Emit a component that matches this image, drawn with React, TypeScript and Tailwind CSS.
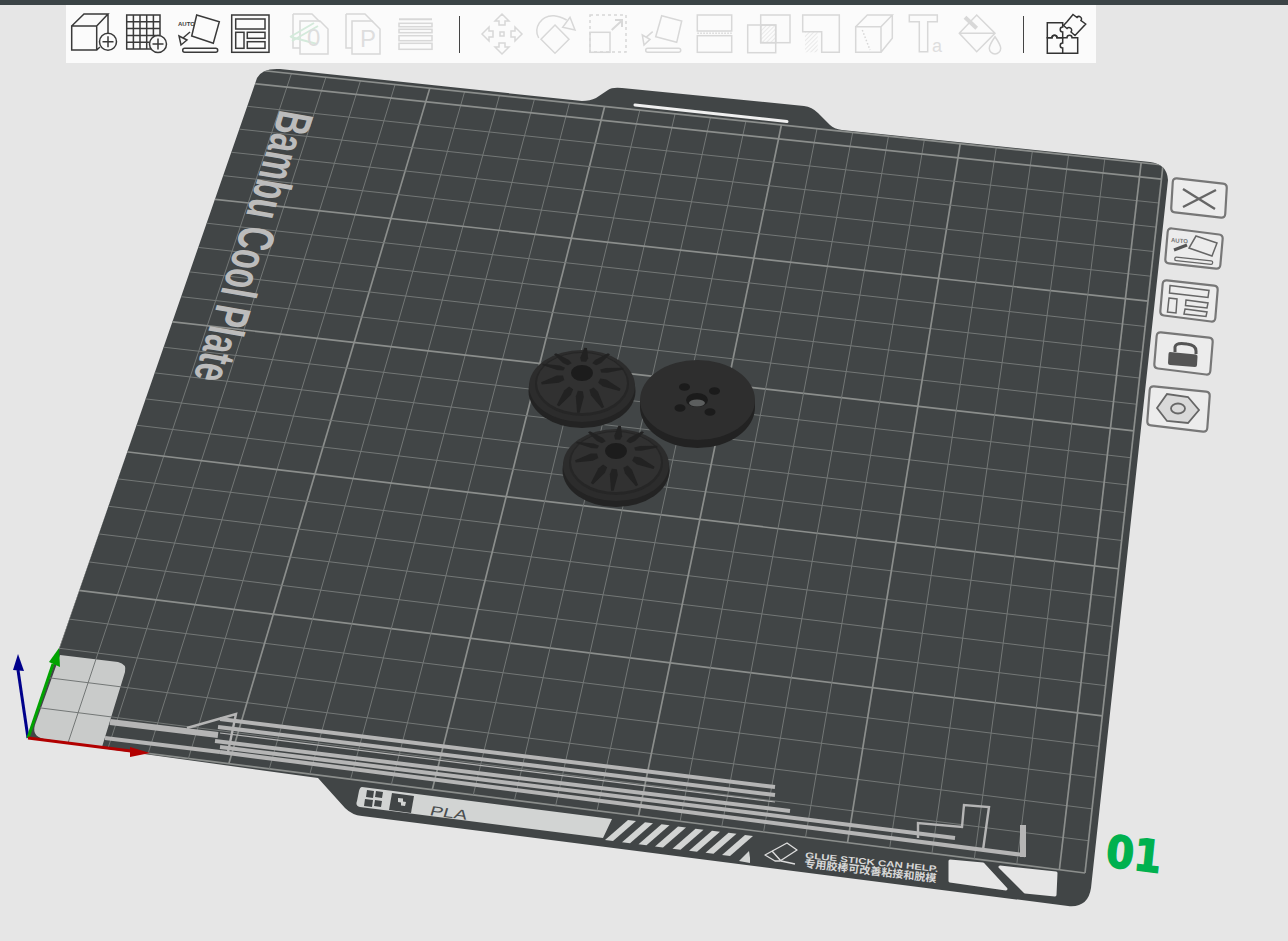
import type { ReactNode } from "react";

const DARK = "#3a3a3a";
const OFF = "#d8d8d8";
const PLATE =
  "M257 78 Q262 68 280 69 L582 101 Q590 101 596 98 L608 90 Q612 87 622 88 L804 106 Q812 107 818 113 L830 125 Q834 129 842 130 L1150 162 Q1167 164 1168 180 L1091 888 Q1088 908 1068 906 L362 816 Q352 815 345 808 L318 778 L28 738 Z";

// plate homography: bed millimetres -> screen pixels
const BL = [28, 738];
const BR = [1085, 873];
const TR = [1163, 165];
const TL = [257, 70];

const dx1 = BR[0] - TR[0];
const dx2 = TL[0] - TR[0];
const sx = BL[0] - BR[0] + TR[0] - TL[0];
const dy1 = BR[1] - TR[1];
const dy2 = TL[1] - TR[1];
const sy = BL[1] - BR[1] + TR[1] - TL[1];
const den = dx1 * dy2 - dx2 * dy1;
const g = (sx * dy2 - dx2 * sy) / den;
const h = (dx1 * sy - sx * dy1) / den;
const a = BR[0] - BL[0] + g * BR[0];
const b = TL[0] - BL[0] + h * TL[0];
const d = BR[1] - BL[1] + g * BR[1];
const e = TL[1] - BL[1] + h * TL[1];

function project(mmX: number, mmY: number) {
  const u = mmX / 256;
  const v = mmY / 256;
  const w = g * u + h * v + 1;
  return [(a * u + b * v + BL[0]) / w, (d * u + e * v + BL[1]) / w];
}

const gridSteps = Array.from({ length: 26 }, (_, i) => i * 10).concat(256);

function BedGrid() {
  return (
    <g clipPath="url(#plate-clip)">
      {gridSteps.map((mm) => {
        const major = mm % 50 === 0 || mm === 256;
        const [x1, y1] = project(mm, 0);
        const [x2, y2] = project(mm, 256);
        const [x3, y3] = project(0, mm);
        const [x4, y4] = project(256, mm);
        const color = major ? "#8b8e8c" : "#737776";
        const width = major ? 1.7 : 1;
        return (
          <g key={mm} stroke={color} strokeWidth={width}>
            <line x1={x1} y1={y1} x2={x2} y2={y2} />
            <line x1={x3} y1={y3} x2={x4} y2={y4} />
          </g>
        );
      })}
    </g>
  );
}

const wheelAngles = [200, 165, 125, 95, 60, 25, -10, -50, -85, -130];

function Wheel({ cx, cy, hubY }: { cx: number; cy: number; hubY: number }) {
  return (
    <g>
      <ellipse cx={cx} cy={cy + 5} rx={53.5} ry={37} fill="#232323" />
      <ellipse cx={cx} cy={cy} rx={53} ry={36} fill="#2c2c2c" />
      <ellipse cx={cx} cy={cy - 2} rx={47} ry={32} fill="#262626" />
      <ellipse cx={cx} cy={cy - 3} rx={45} ry={30} fill="#313131" />
      {wheelAngles.map((ang) => {
        const c = Math.cos((ang * Math.PI) / 180);
        const s = Math.sin((ang * Math.PI) / 180);
        const ys = s < 0 ? 0.6 : 0.95;
        const pt = (r: number, w: number) => `${cx + r * c - w * s},${hubY + (r * s + w * c) * ys}`;
        const points = [pt(19, 2.5), pt(25, 4), pt(42, 1.3), pt(42, -1.3), pt(25, -4), pt(19, -2.5)].join(" ");
        return <polygon key={ang} points={points} fill="#222222" />;
      })}
      <ellipse cx={cx} cy={hubY} rx={11} ry={8} fill="#1c1c1c" />
    </g>
  );
}

function FlatDisc() {
  return (
    <g>
      <ellipse cx={697.5} cy={407} rx={57.5} ry={41} fill="#222222" />
      <rect x={640} y={401} width={115} height={6} fill="#222222" />
      <ellipse cx={697.5} cy={400} rx={57.5} ry={40} fill="#2e2e2e" />
      <ellipse cx={684.5} cy={387} rx={5.5} ry={3.8} fill="#1b1b1b" />
      <ellipse cx={714.5} cy={391} rx={5.5} ry={3.8} fill="#1b1b1b" />
      <ellipse cx={680} cy={408} rx={5.5} ry={3.8} fill="#1b1b1b" />
      <ellipse cx={710} cy={412} rx={5.5} ry={3.8} fill="#1b1b1b" />
      <ellipse cx={697} cy={400} rx={11} ry={7} fill="#1b1b1b" />
      <ellipse cx={697} cy={403} rx={8} ry={3.5} fill="#5c5e5e" />
    </g>
  );
}

function PurgeLines() {
  return (
    <g stroke="#b5b5b5" fill="none">
      <line x1={110} y1={722} x2={218} y2={735} strokeWidth={6} />
      <line x1={105} y1={738} x2={220} y2={752} strokeWidth={4} />
      <line x1={220} y1={719} x2={775} y2={787} strokeWidth={4} />
      <line x1={218} y1={727} x2={775} y2={795} strokeWidth={4} />
      <line x1={220} y1={733} x2={775} y2={802} strokeWidth={1.2} />
      <line x1={215} y1={741} x2={790} y2={811} strokeWidth={4} />
      <line x1={220} y1={747} x2={955} y2={838} strokeWidth={4} />
      <path d="M220 752 L1023 855 V825" strokeWidth={4} />
      <line x1={1023} y1={857} x2={1023} y2={825} strokeWidth={6} />
      <path d="M187 728 L236 714 L228 752" strokeWidth={2.4} />
      <path d="M918 838 V823 L962 827 L964 805 L989 807 L983 850" strokeWidth={2.4} />
    </g>
  );
}

function HatchStrip() {
  const stripes = [605, 622, 638.5, 655, 672.5, 689, 705.5, 722];
  return (
    <g fill="#d2d4d3">
      {stripes.map((x) => {
        const botY = 840 + (x - 605) * 0.128;
        const topY = botY - 20;
        return (
          <polygon
            key={x}
            points={`${x},${botY} ${x + 23},${topY} ${x + 31},${topY + 1} ${x + 8},${botY + 1}`}
          />
        );
      })}
      <polygon points="739,861 749,851 750,858 750,863" />
      <path d="M362 787 L612 819 L603 838 L360 807 Q355 806 357 801 L359 791 Q360 787 362 787 Z" />
    </g>
  );
}

// rounded quad, for the tilted side buttons
function roundedQuad(pts: number[][], r: number) {
  let out = "";
  pts.forEach((p, i) => {
    const prev = pts[(i + pts.length - 1) % pts.length];
    const next = pts[(i + 1) % pts.length];
    const toward = (q: number[]) => {
      const len = Math.hypot(q[0] - p[0], q[1] - p[1]);
      return [p[0] + ((q[0] - p[0]) * r) / len, p[1] + ((q[1] - p[1]) * r) / len];
    };
    const start = toward(prev);
    const end = toward(next);
    out += `${i === 0 ? "M" : "L"}${start[0]} ${start[1]} Q${p[0]} ${p[1]} ${end[0]} ${end[1]} `;
  });
  return out + "Z";
}

function SideButton({ pts, children }: { pts: number[][]; children: ReactNode }) {
  return (
    <g>
      <path d={roundedQuad(pts, 4)} fill="#ececec" stroke="#777777" strokeWidth={2.2} />
      {children}
    </g>
  );
}

function PlateScene() {
  return (
    <svg className="absolute inset-0 h-[941px] w-[1288px]" viewBox="0 0 1288 941">
      <defs>
        <clipPath id="plate-clip">
          <path d={PLATE} />
        </clipPath>
      </defs>
      <path d={PLATE} fill="#414546" />
      <path d="M60 655 L118 662 Q127 664 125 672 L102 747 L44 739 Q30 736 36 722 Z" fill="#c9cbca" />
      <BedGrid />
      <line x1={635} y1={105} x2={787} y2={121.5} stroke="#f0f0f0" strokeWidth={3} strokeLinecap="round" />
      <PurgeLines />
      <HatchStrip />

      <text
        transform="matrix(-0.307 0.951 -0.986 -0.169 280 109)"
        fontSize={50}
        fontWeight={700}
        textLength={283}
        lengthAdjust="spacingAndGlyphs"
        fill="#bcbcbc"
        className="font-['Liberation_Sans',sans-serif]"
      >
        Bambu Cool Plate
      </text>

      <path d="M367 790 l7 1 l-1 7 l-7 -1 Z M376 791 l7 1 l-1 6 l-7 -1 Z M365 799 l8 1 l-1 7 l-8 -1 Z M375 800 l7 1 l-1 6 l-7 -1 Z" fill="#414546" />
      <path d="M392 793 L414 796 L411 813 L389 810 Z" fill="#414546" />
      <path d="M398 798 l5 0.6 l0 3 l3 0.4 l-1 4 l-4 -0.5 l0 -3 l-3 -0.4 Z" fill="#d2d4d3" />
      <text
        transform="matrix(1 0.13 -0.3 1 429 815)"
        fontSize={13}
        textLength={37}
        lengthAdjust="spacingAndGlyphs"
        fill="#4a4d4e"
        className="font-['Liberation_Sans',sans-serif]"
      >
        PLA
      </text>

      <g fill="none" stroke="#dcdcdc" strokeWidth={1.4} strokeLinejoin="round">
        <path d="M765 855 L787 843 L797 850 L780 861 L775 861 Z" />
        <path d="M772 851 L781 861 M781 861 L795 864" />
      </g>
      <text
        transform="matrix(1 0.105 -0.1 1 805 858)"
        fontSize={8.5}
        fontWeight={700}
        textLength={133}
        lengthAdjust="spacingAndGlyphs"
        fill="#d8d8d8"
        className="font-['Liberation_Sans',sans-serif]"
      >
        GLUE STICK CAN HELP.
      </text>
      <text
        transform="matrix(1 0.115 -0.1 1 804 867)"
        fontSize={10.5}
        fontWeight={700}
        textLength={132}
        lengthAdjust="spacingAndGlyphs"
        fill="#d8d8d8"
        className="font-['Noto_Sans_CJK_SC',sans-serif]"
      >
        专用胶棒可改善粘接和脱模
      </text>

      <polygon points="950,861 983,864 1006,889 950,881" fill="#e6e6e6" stroke="#e6e6e6" strokeLinejoin="round" strokeWidth={3} />
      <polygon points="1000,867 1056,873 1055,895 1025,892" fill="#e6e6e6" stroke="#e6e6e6" strokeLinejoin="round" strokeWidth={3} />

      <Wheel cx={582} cy={386} hubY={373} />
      <FlatDisc />
      <Wheel cx={616} cy={465} hubY={451} />

      {/* axes */}
      <line x1={28} y1={738} x2={18} y2={670} stroke="#00008b" strokeWidth={3} />
      <polygon points="18,654 24,671 13,670" fill="#00008b" />
      <line x1={28} y1={738} x2={53} y2={664} stroke="#00a300" strokeWidth={3} />
      <polygon points="59,648 60,667 49,662" fill="#00a300" />
      <line x1={28} y1={738} x2={131} y2={751} stroke="#b20000" strokeWidth={3} />
      <polygon points="150,753 130,747 130,757" fill="#b20000" />

      <text
        transform="matrix(1 0.13 -0.1 1 1105 866)"
        fontSize={44}
        fontWeight={700}
        textLength={55}
        lengthAdjust="spacingAndGlyphs"
        fill="#00b14f"
        stroke="#00b14f"
        strokeWidth={1.5}
        className="font-['DejaVu_Sans',sans-serif]"
      >
        01
      </text>

      <SideButton pts={[[1173, 178], [1227, 184], [1225, 218], [1171, 212]]}>
        <path d="M1183 189 L1215 209 M1183 207 L1216 190" stroke="#666666" strokeWidth={2.4} />
      </SideButton>
      <SideButton pts={[[1168, 228], [1223, 235], [1220, 269], [1165, 263]]}>
        <polygon points="1196,236 1217,243 1212,256 1189,248" fill="none" stroke="#666666" strokeWidth={1.5} />
        <rect x={1175} y={257} width={38} height={3.5} rx={1.5} transform="rotate(6 1175 257)" fill="none" stroke="#666666" strokeWidth={1.3} />
        <path d="M1174 250 L1187 245" stroke="#555555" strokeWidth={3} />
        <text
          transform="matrix(1 0.09 0 1 1171 242)"
          fontSize={6}
          fontWeight={700}
          fill="#777777"
          className="font-['Liberation_Sans',sans-serif]"
        >
          AUTO
        </text>
      </SideButton>
      <SideButton pts={[[1163, 280], [1218, 286], [1215, 322], [1160, 315]]}>
        <g fill="none" stroke="#666666" strokeWidth={1.5}>
          <polygon points="1170,285.5 1209,290.5 1208,297.5 1169.5,293" />
          <polygon points="1169,298 1177,299 1176,313 1167.5,312" />
          <polygon points="1186,300 1208,303 1207,308 1185.5,305.5" />
          <polygon points="1185,309 1207,312 1206,316.5 1184,314" />
        </g>
      </SideButton>
      <SideButton pts={[[1157, 332], [1213, 338], [1210, 375], [1154, 368]]}>
        <path d="M1175 352 V347 Q1176 342 1187 344 Q1196 345 1196 351 V354" fill="none" stroke="#555555" strokeWidth={3} />
        <path d="M1170 352 L1196 354.5 Q1198 355 1197.5 357 L1197 365 Q1197 367 1195 367 L1170 365 Q1168 365 1168 363 L1168.5 354 Q1168.5 352 1170 352 Z" fill="#555555" />
      </SideButton>
      <SideButton pts={[[1150, 386], [1210, 392], [1207, 432], [1147, 425]]}>
        <polygon points="1157,408 1167,394 1188,397 1199,410 1188,423 1167,421" fill="#d9d9d9" stroke="#666666" strokeWidth={1.8} />
        <ellipse cx={1178} cy={408.5} rx={7} ry={5} fill="#d9d9d9" stroke="#666666" strokeWidth={1.8} />
      </SideButton>
    </svg>
  );
}

function Icon({ ml, color, children }: { ml?: string; color: string; children: ReactNode }) {
  return (
    <svg
      viewBox="0 0 48 48"
      fill="none"
      stroke={color}
      strokeWidth={1.5}
      className={`h-12 w-12 shrink-0 ${ml ?? ""}`}
    >
      {children}
    </svg>
  );
}

function Plus({ cx, cy }: { cx: number; cy: number }) {
  return (
    <g>
      <circle cx={cx} cy={cy} r={8.5} fill="#fbfbfb" />
      <path d={`M${cx - 5.5} ${cy} H${cx + 5.5} M${cx} ${cy - 5.5} V${cy + 5.5}`} />
    </g>
  );
}

function Hatch({ id, color }: { id: string; color: string }) {
  return (
    <defs>
      <pattern id={id} width="3" height="3" patternUnits="userSpaceOnUse" patternTransform="rotate(-45)">
        <line x1="0" y1="0" x2="3" y2="0" stroke={color} strokeWidth="1" />
      </pattern>
    </defs>
  );
}

function Toolbar() {
  return (
    <div className="relative ml-[66px] flex h-[58px] w-[1030px] items-center bg-[#fbfbfb] pl-1">
      <Icon color={DARK}>
        <path d="M1.7 16 H26.7 V40 H1.7 Z M1.7 16 L14 4 H38 L26.7 16 M38 4 V24 M26.7 40 L30 37" />
        <Plus cx={38} cy={31.7} />
      </Icon>
      <Icon ml="ml-[5px]" color={DARK}>
        <path d="M3.7 5 H37 V39 H3.7 Z M10.4 5 V39 M17 5 V39 M23.7 5 V39 M30.4 5 V39 M3.7 11.8 H37 M3.7 18.6 H37 M3.7 25.4 H37 M3.7 32.2 H37" />
        <Plus cx={35} cy={34} />
      </Icon>
      <Icon ml="ml-[4px]" color={DARK}>
        <polygon points="21.7,5 44.3,11.7 38.3,33.3 16.7,26" />
        <path d="M15 22 L8 28" />
        <polygon points="4,26 12,30 6,35" />
        <rect x={7.7} y={38.3} width={35} height={4} rx={2} />
        <text x={3} y={16} fontSize={6} fontWeight={700} fill={DARK} stroke="none" className="font-['Liberation_Sans',sans-serif]">
          AUTO
        </text>
      </Icon>
      <Icon ml="ml-[4px]" color={DARK}>
        <rect x={4.7} y={5} width={37.3} height={37.3} />
        <rect x={8.7} y={9} width={29.3} height={10} />
        <rect x={8.7} y={22.3} width={8.3} height={16} />
        <rect x={20.3} y={22.3} width={17.7} height={6} />
        <rect x={20.3} y={31.7} width={17.7} height={6.6} />
      </Icon>

      <Icon ml="ml-[10px]" color={OFF}>
        <path d="M8 4 H27 L35 12 M8 4 V38 H15" />
        <path d="M15 11 H35 L43 19 V44 H15 Z" />
        <path d="M5 27 L29 13 M7 31 L33 16 M6 27 L32 34" stroke="#d4eadb" strokeWidth={2} />
        <text x={22} y={36} fontSize={24} fill="#dedede" stroke="none" className="font-['Liberation_Sans',sans-serif]">
          0
        </text>
      </Icon>
      <Icon ml="ml-[6px]" color={OFF}>
        <path d="M7 4 H26 L34 12 M7 4 V38 H13" />
        <path d="M13 11 H33 L41 19 V44 H13 Z" />
        <text x={21} y={37} fontSize={24} fill="#dedede" stroke="none" className="font-['Liberation_Sans',sans-serif]">
          P
        </text>
      </Icon>
      <Icon ml="ml-[5px]" color={OFF}>
        <path d="M7 9.3 H40" strokeWidth={2} />
        <rect x={7} y={13.3} width={33} height={3.4} />
        <rect x={7} y={19.3} width={33} height={3.4} />
        <rect x={7} y={25.7} width={33} height={5} />
        <rect x={7} y={33.3} width={33} height={6} />
      </Icon>

      <div className="ml-[19px] h-[37px] w-px bg-[#444444]" />

      <Icon ml="ml-[19px]" color={OFF}>
        <rect x={21} y={22} width={4} height={4} />
        <path d="M23 4 L30 11 H26 V15 H20 V11 H16 Z" />
        <path d="M23 44 L30 37 H26 V33 H20 V37 H16 Z" />
        <path d="M3 24 L10 17 V21 H14 V27 H10 V31 Z" />
        <path d="M43 24 L36 17 V21 H32 V27 H36 V31 Z" />
      </Icon>
      <Icon ml="ml-[4px]" color={OFF}>
        <polygon points="24,15 38,29.3 24,43.3 10,29.3" />
        <path d="M7.7 28 C2 18 10 5 23 5.7 C28 6 32 8 35.7 10" />
        <polygon points="39,7.3 44,20 31.7,17.3" />
      </Icon>
      <Icon ml="ml-[5px]" color={OFF}>
        <rect x={6} y={5} width={36} height={37} strokeDasharray="3 3" />
        <rect x={6} y={22.3} width={20} height={20} />
        <path d="M27.7 20 L37.7 10.7 M31 10 H38 V17" strokeWidth={2} />
      </Icon>
      <Icon ml="ml-[5px]" color={OFF}>
        <polygon points="24.7,5.7 44.7,11 39.7,32.3 18.7,26.7" />
        <path d="M15.7 21.7 L9 27.3" />
        <polygon points="5.3,25 13,29.3 7,35" />
        <rect x={8.7} y={38.3} width={35} height={4} rx={2} />
      </Icon>
      <Icon ml="ml-[5px]" color={OFF}>
        <rect x={7.3} y={5} width={34.4} height={16} />
        <path d="M7.3 23.3 H41.7" strokeDasharray="1.5 1.5" />
        <rect x={7.3} y={25.7} width={34.4} height={16.6} />
      </Icon>
      <Icon ml="ml-[5px]" color={OFF}>
        <Hatch id="hatch-bool" color={OFF} />
        <rect x={17.7} y={15} width={15} height={17.7} fill="url(#hatch-bool)" />
        <rect x={4.7} y={15} width={28} height={27.7} />
        <rect x={17.7} y={5} width={29.3} height={27.7} />
      </Icon>
      <Icon ml="ml-[6px]" color={OFF}>
        <Hatch id="hatch-support" color={OFF} />
        <rect x={8} y={21.7} width={12.7} height={20.6} fill="url(#hatch-support)" stroke="none" />
        <path d="M5.7 5 H42.3 V42.3 H24.7 V21.7 H5.7 Z" />
      </Icon>
      <Icon ml="ml-[5px]" color={OFF}>
        <path d="M5.7 16.7 H31 V42.3 H5.7 Z M5.7 16.7 L17.3 5 H42.3 L31 16.7 M42.3 5 V28.3 L31 42.3" />
        <path d="M12.3 20 L20 40" strokeDasharray="1.5 2" />
      </Icon>
      <Icon ml="ml-[4px]" color={OFF}>
        <path d="M7.3 5 H35.3 V11.7 H25.7 V41.7 H17.3 V11.7 H7.3 Z" />
        <text x={30} y={41.7} fontSize={18} fill="#dedede" stroke="none" className="font-['Liberation_Sans',sans-serif]">
          a
        </text>
      </Icon>
      <Icon ml="ml-[7px]" color={OFF}>
        <path d="M2.3 23.3 L19.7 5 L38 23.3 L19.7 41.7 Z M2.3 23.3 H38" />
        <path d="M8 7.3 L19.7 18.3" strokeWidth={4} />
        <path d="M38 26.7 C35 31 32.3 35 32.3 38.3 A5.7 5.7 0 0 0 43.7 38.3 C43.7 35 41 31 38 26.7 Z" />
      </Icon>

      <div className="ml-[18px] h-[37px] w-px bg-[#444444]" />

      <Icon ml="ml-[18px]" color="#333333">
        <path d="M5.3 12.7 H20.7 V17 A2.5 2.5 0 0 0 20.7 22 V27.7 H15 A2.5 2.5 0 0 0 10 27.7 H5.3 Z" />
        <path d="M5.3 27.7 H10 A2.5 2.5 0 0 1 15 27.7 H20.7 V33 A2.5 2.5 0 0 0 20.7 38 V43.3 H5.3 Z" />
        <path d="M20.7 27.7 H25 A2.5 2.5 0 0 1 30 27.7 H35.7 V43.3 H20.7" />
        <path d="M25 11.7 L31 4.5 L35 7.5 A2.5 2.5 0 0 1 39 10.5 L43.7 14 L33 25.5 L29 22 A2.5 2.5 0 0 0 25 18.5 L21.5 15.5 Z" />
      </Icon>
    </div>
  );
}

export default function App() {
  return (
    <div className="relative h-[941px] w-[1288px] overflow-hidden bg-[#e6e6e6]">
      <PlateScene />
      <div className="relative h-[5px] bg-[#3b4446]" />
      <Toolbar />
    </div>
  );
}
